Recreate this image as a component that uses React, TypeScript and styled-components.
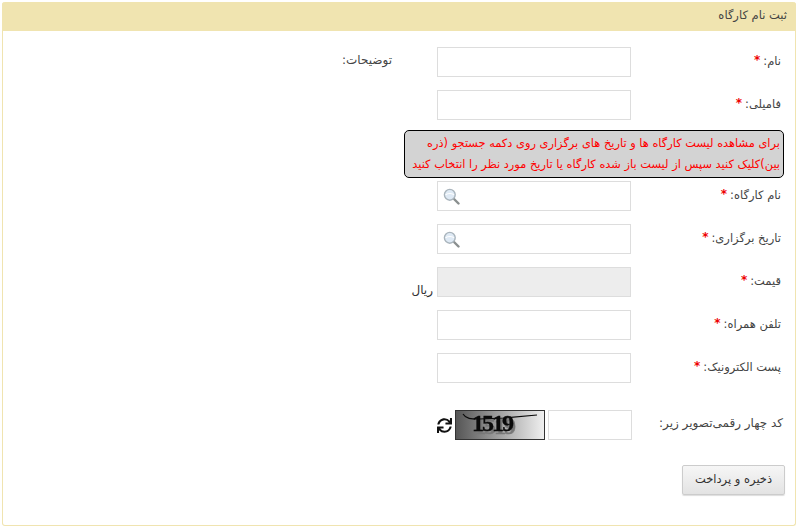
import React from 'react';
import styled, { createGlobalStyle } from 'styled-components';
import { FaSync } from 'react-icons/fa';

const Global = createGlobalStyle`
  html, body { margin: 0; padding: 0; background: #fff; }
  body { font-family: Tahoma, "DejaVu Sans", sans-serif; }
`;

const Page = styled.div`
  padding: 2px 2px 1px 2px;
  box-sizing: border-box;
  width: 798px;
  direction: rtl;
`;

const Panel = styled.section`
  border: 1px solid #f0e4b0;
  border-top: 0;
  border-radius: 3px;
  width: 794px;
  box-sizing: border-box;
  background: #fff;
`;

const Header = styled.h1`
  margin: 0 -1px;
  height: 29px;
  background: #f0e4b0;
  border-radius: 3px 3px 0 0;
  color: #444;
  font-size: 11.5px;
  font-weight: normal;
  line-height: 27px;
  padding-right: 9px;
`;

const Body = styled.div`
  padding: 16px 10px 30px 0;
  display: flex;
  flex-direction: column;
`;

const Row = styled.div`
  display: flex;
  align-items: flex-start;
  margin-bottom: 13px;
`;

const Label = styled.label`
  width: 154px;
  box-sizing: border-box;
  padding: 4px 4px 0 0;
  flex: none;
  font-size: 11.5px;
  line-height: 18px;
  color: #444;
`;

const Star = styled.span`
  color: #e00;
  font-size: 12px;
  font-weight: bold;
  margin-right: 3px;
  vertical-align: 1px;
`;

const Input = styled.input<{ $width?: number; $disabled?: boolean }>`
  width: ${p => p.$width ?? 194}px;
  height: 30px;
  box-sizing: border-box;
  flex: none;
  margin: 0;
  padding: 0 4px;
  border: 1px solid #ddd;
  background: ${p => (p.$disabled ? '#ededed' : '#fff')};
  outline: none;
`;

const SearchField = styled.div`
  position: relative;
  width: 194px;
  height: 30px;
  flex: none;
`;

const SearchIcon = styled.svg`
  position: absolute;
  left: 6px;
  top: 7px;
  width: 17px;
  height: 17px;
`;

const Description = styled.span`
  margin-right: 45px;
  padding-top: 4px;
  font-size: 12px;
  line-height: 18px;
  color: #444;
`;

const Unit = styled.span`
  align-self: flex-end;
  margin-right: 4px;
  font-size: 12px;
  line-height: 14px;
  color: #333;
`;

const Notice = styled.p`
  margin: -3px 1px 3px 0;
  width: 380px;
  height: 48px;
  box-sizing: border-box;
  border: 1px solid #000;
  border-radius: 5px;
  background: #d3d3d3;
  color: #f00;
  font-size: 11.4px;
  line-height: 21px;
  padding: 2px 3px 0 1px;
  overflow: hidden;
`;

const CaptchaRow = styled(Row)`
  margin-top: 14px;
  margin-bottom: 25px;
`;

const CaptchaLabel = styled(Label)`
  width: 153px;
  font-size: 12px;
  padding-right: 2px;
`;

const CaptchaImage = styled.svg`
  width: 90px;
  height: 30px;
  margin-right: 3px;
  flex: none;
  display: block;
`;

const CaptchaText = styled.text`
  font-family: "Liberation Serif", serif;
  font-weight: bold;
  font-size: 24px;
  letter-spacing: -2px;
  fill: #0a0a0a;
  stroke: #0a0a0a;
  stroke-width: 0.4px;
  direction: ltr;
  filter: drop-shadow(2px 3px 0 #777);
`;

const Refresh = styled.button`
  border: 0;
  padding: 0;
  margin: 8px 3px 0 0;
  background: none;
  width: 15px;
  height: 15px;
  font-size: 15px;
  color: #111;
  display: flex;
  align-items: center;
  justify-content: center;
`;

const Save = styled.button`
  align-self: flex-start;
  width: 103px;
  height: 30px;
  box-sizing: border-box;
  border: 1px solid #ccc;
  border-radius: 2px;
  background: linear-gradient(#f6f6f6, #e3e3e3);
  box-shadow: 0 1px 1px #ddd;
  color: #333;
  font-family: inherit;
  font-size: 11.5px;
  padding: 0 0 2px;
`;

const Required = () => <Star>*</Star>;

const Magnifier = () => (
  <SearchIcon viewBox="0 0 17 17">
    <path d="M10.5 10.5 L15.5 15.5" stroke="#8a8f8f" strokeWidth="2.4" strokeLinecap="round" />
    <circle cx="6.8" cy="6.8" r="5.4" fill="#dfeaf5" stroke="#a9b4bc" strokeWidth="1.4" />
    <path d="M2.5 7 C4 5 9.5 5 11 7" fill="none" stroke="#fff" strokeWidth="1.2" />
  </SearchIcon>
);

const Captcha = () => (
  <CaptchaImage viewBox="0 0 90 30">
    <defs>
      <linearGradient id="captchaFill" x1="0" x2="1" y1="0" y2="0">
        <stop offset="0" stopColor="#555" />
        <stop offset="1" stopColor="#f0f0f0" />
      </linearGradient>
    </defs>
    <rect x="0.5" y="0.5" width="89" height="29" fill="url(#captchaFill)" stroke="#333" />
    <CaptchaText x="17" y="21">1519</CaptchaText>
    <path d="M8 4 C11 9 16 9 24 9 L50 8 L82 5" fill="none" stroke="#0a0a0a" strokeWidth="1.2" />
  </CaptchaImage>
);

export default function App() {
  return (
    <Page>
      <Global />
      <Panel>
        <Header>ثبت نام کارگاه</Header>
        <Body>
          <Row>
            <Label>نام:<Required /></Label>
            <Input />
            <Description>توضیحات:</Description>
          </Row>
          <Row>
            <Label>فامیلی:<Required /></Label>
            <Input />
          </Row>
          <Notice>
            برای مشاهده لیست کارگاه ها و تاریخ های برگزاری روی دکمه جستجو (ذره بین)کلیک کنید سپس از لیست باز شده کارگاه یا تاریخ مورد نظر را انتخاب کنید
          </Notice>
          <Row>
            <Label>نام کارگاه:<Required /></Label>
            <SearchField>
              <Input />
              <Magnifier />
            </SearchField>
          </Row>
          <Row>
            <Label>تاریخ برگزاری:<Required /></Label>
            <SearchField>
              <Input />
              <Magnifier />
            </SearchField>
          </Row>
          <Row>
            <Label>قیمت:<Required /></Label>
            <Input $disabled disabled />
            <Unit>ریال</Unit>
          </Row>
          <Row>
            <Label>تلفن همراه:<Required /></Label>
            <Input />
          </Row>
          <Row>
            <Label>پست الکترونیک:<Required /></Label>
            <Input />
          </Row>
          <CaptchaRow>
            <CaptchaLabel>کد چهار رقمی‌تصویر زیر:</CaptchaLabel>
            <Input $width={84} />
            <Captcha />
            <Refresh aria-label="refresh"><FaSync /></Refresh>
          </CaptchaRow>
          <Save>ذخیره و پرداخت</Save>
        </Body>
      </Panel>
    </Page>
  );
}
